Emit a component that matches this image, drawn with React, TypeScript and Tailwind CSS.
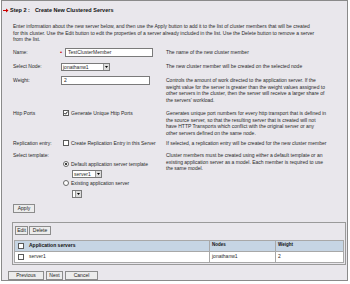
import React from 'react';

const Check = ({ checked = false }: { checked?: boolean }) => (
  <span className="inline-flex w-[6px] h-[6px] border border-[#5a5a5a] bg-white items-center justify-center shrink-0">
    {checked && (
      <svg width="4" height="4" viewBox="0 0 4 4">
        <path d="M0.4 2 L1.5 3.2 L3.6 0.6" stroke="#000" strokeWidth="0.9" fill="none" />
      </svg>
    )}
  </span>
);

const Radio = ({ on = false }: { on?: boolean }) => (
  <span className="inline-flex w-[6px] h-[6px] rounded-full border border-[#6a6a6a] bg-white items-center justify-center shrink-0">
    {on && <span className="w-[2px] h-[2px] rounded-full bg-black" />}
  </span>
);

const Select = ({ value, className = '' }: { value: string; className?: string }) => (
  <div className={`flex h-[8px] border border-[#7a7a7a] bg-white ${className}`}>
    <span className="flex-1 pl-[1px] leading-[6px] whitespace-nowrap overflow-hidden">{value}</span>
    <span className="w-[6px] h-full bg-[#dcdcdc] border-l border-[#9a9a9a] flex items-center justify-center">
      <svg width="3" height="2" viewBox="0 0 3 2">
        <path d="M0 0 H3 L1.5 2 Z" fill="#000" />
      </svg>
    </span>
  </div>
);

const Btn = ({ children, className = '' }: { children: React.ReactNode; className?: string }) => (
  <button className={`h-[9px] border border-[#8c8c8c] bg-[#ececec] text-[5px] leading-[7px] text-[#222] flex items-center justify-center ${className}`}>
    {children}
  </button>
);

export default function App() {
  return (
    <div className="w-[350px] h-[284px] bg-white font-['Liberation_Sans',Arial,sans-serif] text-[5px] leading-[6.5px] text-[#2a2a2a]">
      <div className="ml-[1px] w-[347px] h-[281px] border border-[#8a8a8a] bg-[#e9e7ec] flex flex-col">
        {/* step header */}
        <div className="mt-[6px] h-[6px] pl-[1px] flex items-center font-bold text-[5.5px] text-[#111]">
          <svg width="6" height="5" viewBox="0 0 6 5" className="mr-[1px]">
            <path d="M0 2.5 H4" stroke="#cc0000" strokeWidth="1" />
            <path d="M3 0.5 L5.5 2.5 L3 4.5 Z" fill="#cc0000" />
          </svg>
          <span>Step 2 :</span>
          <span className="ml-[5px]">Create New Clustered Servers</span>
        </div>

        <p className="mt-[10px] pl-[11px] whitespace-nowrap">
          Enter information about the new server below, and then use the Apply button to add it to the list of cluster members that will be created
          <br />
          for this cluster. Use the Edit button to edit the properties of a server already included in the list. Use the Delete button to remove a server
          <br />
          from the list.
        </p>

        {/* Name */}
        <div className="mt-[5.5px] pl-[11px] grid grid-cols-[47px_106px_179px] items-start">
          <span className="pt-[1px]">Name:</span>
          <div className="flex items-center">
            <span className="w-[5px] text-[#cc0000] text-[6px] leading-[9px]">•</span>
            <div className="w-[88px] h-[9px] border border-[#7a7a7a] bg-white pl-[2px] leading-[7px]">TestClusterMember</div>
          </div>
          <span className="pt-[1px] whitespace-nowrap">The name of the new cluster member</span>
        </div>

        {/* Select node */}
        <div className="mt-[6px] pl-[11px] grid grid-cols-[47px_106px_179px] items-start">
          <span>Select Node:</span>
          <Select value="jonathanw1" className="w-[49px] ml-[1px]" />
          <span className="whitespace-nowrap">The new cluster member will be created on the selected node</span>
        </div>

        {/* Weight */}
        <div className="mt-[5px] pl-[11px] grid grid-cols-[47px_106px_179px] items-start">
          <span className="pt-[1px]">Weight:</span>
          <div className="w-[89px] h-[9px] border border-[#7a7a7a] bg-white pl-[2px] leading-[7px] ml-[1px]">2</div>
          <span className="pt-[1px] whitespace-nowrap">
            Controls the amount of work directed to the application server. If the
            <br />
            weight value for the server is greater than the weight values assigned to
            <br />
            other servers in the cluster, then the server will receive a larger share of
            <br />
            the servers' workload.
          </span>
        </div>

        {/* Http ports */}
        <div className="mt-[7px] pl-[11px] grid grid-cols-[47px_106px_179px] items-start">
          <span>Http Ports</span>
          <div className="flex items-center gap-[2px] pl-[3px] h-[6.5px]">
            <Check checked />
            <span className="whitespace-nowrap">Generate Unique Http Ports</span>
          </div>
          <span className="whitespace-nowrap">
            Generates unique port numbers for every http transport that is defined in
            <br />
            the source server, so that the resulting server that is created will not
            <br />
            have HTTP Transports which conflict with the original server or any
            <br />
            other servers defined on the same node.
          </span>
        </div>

        {/* Replication */}
        <div className="mt-[4px] pl-[11px] grid grid-cols-[47px_106px_179px] items-start">
          <span className="whitespace-nowrap">Replication entry:</span>
          <div className="flex items-center gap-[2px] pl-[3px] h-[6.5px]">
            <Check />
            <span className="whitespace-nowrap">Create Replication Entry in this Server</span>
          </div>
          <span className="whitespace-nowrap">If selected, a replication entry will be created for the new cluster member</span>
        </div>

        {/* Template */}
        <div className="mt-[5.5px] pl-[11px] grid grid-cols-[47px_106px_179px] items-start">
          <span className="whitespace-nowrap">Select template:</span>
          <div className="flex flex-col pl-[3px]">
            <div className="mt-[9px] flex items-center gap-[2px] h-[6.5px]">
              <Radio on />
              <span className="whitespace-nowrap">Default application server template</span>
            </div>
            <Select value="server1" className="mt-[2.5px] ml-[9px] w-[30px]" />
            <div className="mt-[1.5px] flex items-center gap-[2px] h-[6.5px]">
              <Radio />
              <span className="whitespace-nowrap">Existing application server</span>
            </div>
            <Select value="" className="mt-[3.5px] ml-[9px] w-[10px]" />
          </div>
          <span className="whitespace-nowrap">
            Cluster members must be created using either a default template or an
            <br />
            existing application server as a model. Each member is required to use
            <br />
            the same model.
          </span>
        </div>

        <div className="mt-[6px] pl-[11px]">
          <Btn className="w-[22px]">Apply</Btn>
        </div>

        {/* Cluster members table */}
        <div className="mt-[9px] ml-[10px] w-[334px] border border-[#9a9a9a] flex flex-col px-[1px] pb-[1px]">
          <div className="mt-[3px] flex gap-[1px] pl-[1px]">
            <Btn className="w-[13px]">Edit</Btn>
            <Btn className="w-[22px]">Delete</Btn>
          </div>
          <div className="mt-[5px] grid grid-cols-[11px_183px_66px_1fr] border border-[#a8a8a8]">
            <div className="h-[10px] bg-[#c6d5e4] flex items-center justify-center">
              <Check />
            </div>
            <div className="h-[10px] bg-[#c6d5e4] flex items-center pl-[3px] font-bold text-[#111]">Application servers</div>
            <div className="h-[10px] bg-[#c6d5e4] flex items-center pl-[2px] border-l border-[#a8a8a8] font-bold text-[4.5px] text-[#111]">Nodes</div>
            <div className="h-[10px] bg-[#c6d5e4] flex items-center pl-[2px] border-l border-[#a8a8a8] font-bold text-[4.5px] text-[#111]">Weight</div>
            <div className="h-[11px] bg-white border-t border-[#a8a8a8] flex items-center justify-center">
              <Check />
            </div>
            <div className="h-[11px] bg-white border-t border-[#a8a8a8] flex items-center pl-[3px]">server1</div>
            <div className="h-[11px] bg-white border-t border-l border-[#a8a8a8] flex items-center pl-[2px]">jonathanw1</div>
            <div className="h-[11px] bg-white border-t border-l border-[#a8a8a8] flex items-center pl-[2px]">2</div>
          </div>
        </div>

        <div className="mt-[6px] pl-[6px] flex gap-[2px]">
          <Btn className="w-[36px]">Previous</Btn>
          <Btn className="w-[17px]">Next</Btn>
          <Btn className="w-[33px]">Cancel</Btn>
        </div>
      </div>
    </div>
  );
}
